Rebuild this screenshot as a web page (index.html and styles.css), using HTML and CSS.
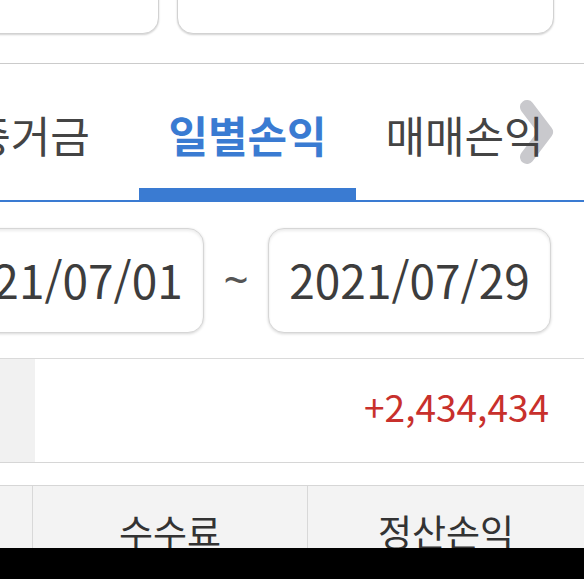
FILE: index.html
```html
<!DOCTYPE html>
<html lang="ko">
<head>
<meta charset="utf-8">
<title>일별손익</title>
<link rel="stylesheet" href="styles.css">
</head>
<body>
<div class="page">
  <div class="cards">
    <div class="card"></div>
    <div class="card"></div>
  </div>

  <nav class="tabs">
    <svg class="tab-next" width="40" height="70" viewBox="0 0 40 70" aria-hidden="true">
      <polyline points="9,9 28,34 9,59" fill="none" stroke="#c9c9cd" stroke-width="14" stroke-linecap="round" stroke-linejoin="round"/>
    </svg>
    <div class="tab"><span class="tab-label">증거금</span><span class="tab-bar"></span></div>
    <div class="tab active"><span class="tab-label">일별손익</span><span class="tab-bar"></span></div>
    <div class="tab"><span class="tab-label">매매손익</span><span class="tab-bar"></span></div>
  </nav>

  <section class="period">
    <div class="date-box">2021/07/01</div>
    <div class="tilde">~</div>
    <div class="date-box">2021/07/29</div>
  </section>

  <section class="total">
    <div class="total-side"></div>
    <div class="total-amount">+2,434,434</div>
  </section>

  <section class="table-head">
    <div class="th th-side"></div>
    <div class="th th-fee">수수료</div>
    <div class="th th-pnl">정산손익</div>
  </section>

  <div class="system-bar"></div>
</div>
</body>
</html>
```

FILE: styles.css
```css
html, body {
  margin: 0;
  padding: 0;
  background: #ffffff;
}

body {
  font-family: "Noto Sans CJK KR", "Noto Sans", sans-serif;
  color: #3d3d3d;
}

.page {
  position: relative;
  width: 584px;
  height: 579px;
  overflow: hidden;
  background: #ffffff;
}

/* top cards */
.cards {
  display: flex;
  gap: 18px;
  margin-left: -218px;
  height: 34px;
  align-items: flex-end;
  border-bottom: 1px solid #cbcbcb;
  padding-bottom: 29px;
}

.card {
  flex: 0 0 377px;
  height: 80px;
  box-sizing: border-box;
  border: 1px solid #d2d2d2;
  border-radius: 16px;
  box-shadow: 0 1px 2px rgba(0, 0, 0, 0.18);
  background: #ffffff;
}

/* tabs */
.tabs {
  position: relative;
  display: flex;
  margin-left: -78px;
  height: 136px;
  border-bottom: 2px solid #3a7bd2;
}

.tab-next {
  position: absolute;
  left: 596px;
  top: 34px;
  z-index: 0;
}

.tab {
  position: relative;
  z-index: 1;
  flex: 0 0 217px;
  display: flex;
  flex-direction: column;
}

.tab-label {
  flex: 1;
  display: flex;
  align-items: center;
  justify-content: center;
  padding-top: 16px;
  font-size: 43px;
  line-height: 43px;
  color: #444444;
  white-space: nowrap;
}

.tab-bar {
  height: 12px;
}

.tab.active .tab-label {
  color: #3a7bd2;
  font-weight: 700;
}

.tab.active .tab-bar {
  background: #3a7bd2;
}

/* period */
.period {
  display: flex;
  margin-left: -79px;
  padding: 26px 0 25px;
  border-bottom: 1px solid #dadada;
}

.date-box {
  flex: 0 0 283px;
  height: 105px;
  box-sizing: border-box;
  display: flex;
  align-items: center;
  justify-content: center;
  padding-bottom: 4px;
  border: 1px solid #d6d6d6;
  border-radius: 16px;
  box-shadow: inset 0 2px 3px rgba(0, 0, 0, 0.08), 0 1px 3px rgba(0, 0, 0, 0.16);
  font-size: 46px;
  color: #3d3d3d;
  background: #ffffff;
}

.tilde {
  flex: 0 0 64px;
  display: flex;
  align-items: center;
  justify-content: center;
  font-family: "Noto Sans", sans-serif;
  font-size: 44px;
  color: #555555;
  padding-bottom: 4px;
}

/* total */
.total {
  display: flex;
  height: 103px;
  border-bottom: 1px solid #d6d6d6;
}

.total-side {
  flex: 0 0 35px;
  background: #f1f1f1;
}

.total-amount {
  flex: 1;
  display: flex;
  align-items: center;
  justify-content: flex-end;
  padding: 0 35px 9px 0;
  font-size: 37px;
  color: #c8302c;
}

/* table head */
.table-head {
  display: flex;
  margin-top: 22px;
  height: 100px;
  border-top: 1px solid #d6d6d6;
  background: #f3f3f3;
}

.th {
  box-sizing: border-box;
  padding-top: 18px;
  text-align: center;
  font-size: 37px;
  color: #333333;
}

.th-side {
  flex: 0 0 33px;
  border-right: 1px solid #d8d8d8;
}

.th-fee {
  flex: 0 0 275px;
  border-right: 1px solid #d8d8d8;
}

.th-pnl {
  flex: 1;
}

/* android system bar overlay */
.system-bar {
  position: absolute;
  left: 0;
  right: 0;
  bottom: 0;
  height: 31px;
  background: #000000;
}
```
